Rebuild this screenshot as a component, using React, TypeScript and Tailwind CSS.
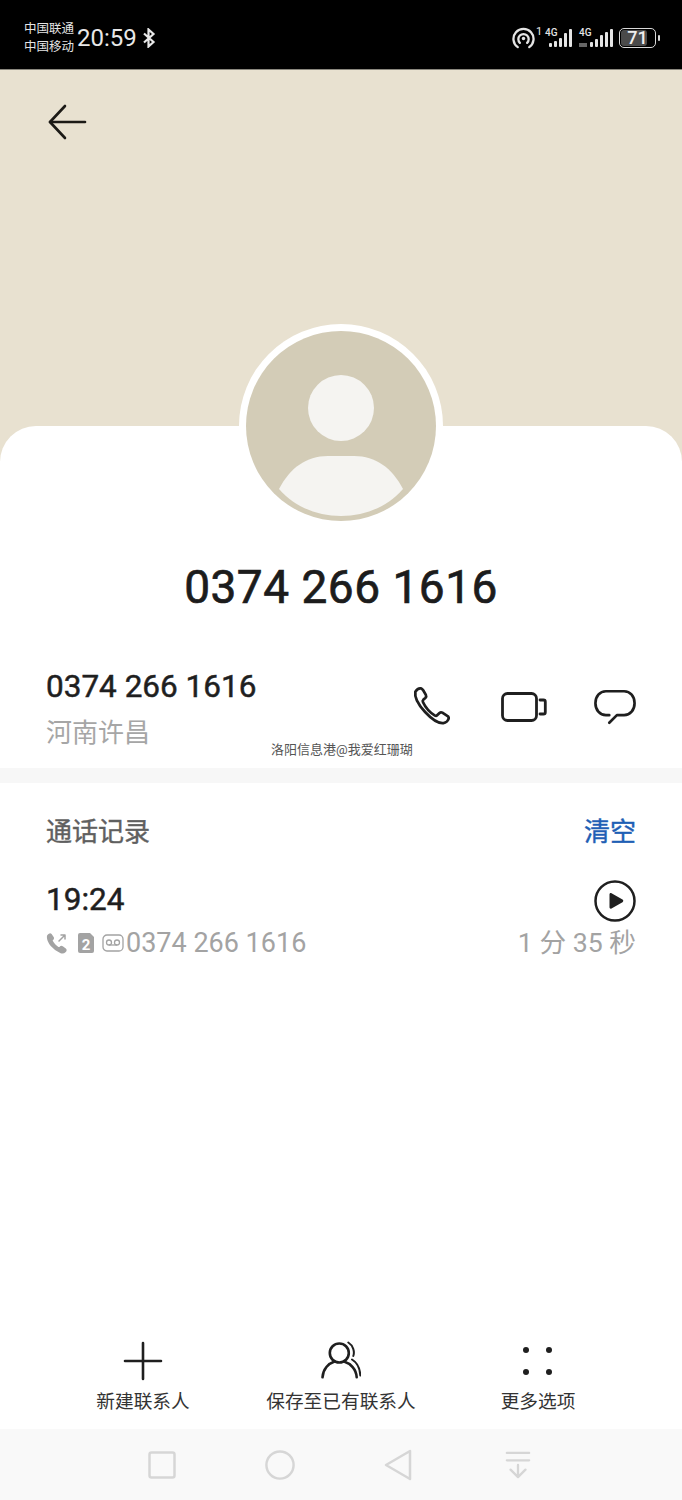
import type { ReactNode } from 'react';

const FONT = "font-['Roboto','Noto_Sans_CJK_SC',sans-serif]";

function BackIcon() {
  return (
    <svg width="40" height="36" viewBox="0 0 40 36" fill="none" stroke="#1c1a16" strokeWidth="2.6" strokeLinecap="round" strokeLinejoin="round">
      <path d="M2 18H37" />
      <path d="M17 2 2 18 17 34" />
    </svg>
  );
}

function Signal({ dim }: { dim: boolean }) {
  return (
    <div className={`relative h-[20px] ${dim ? 'ml-[5px] w-[35px]' : 'ml-[3px] w-[29px]'}`}>
      <span className="absolute left-0 top-0 text-[10px] font-medium leading-none">4G</span>
      {dim ? (
        <svg className="absolute bottom-0 left-0" width="35" height="20" viewBox="0 0 35 20" fill="#e4e4e4">
          <rect x="0" y="15" width="8" height="4" fill="#666666" />
          <rect x="11" y="14" width="3" height="5" rx="1" />
          <rect x="16" y="11" width="3" height="8" rx="1" />
          <rect x="21" y="7" width="3" height="12" rx="1" />
          <rect x="26" y="4" width="3" height="15" rx="1" />
          <rect x="31" y="1" width="3" height="18" rx="1" />
        </svg>
      ) : (
        <svg className="absolute bottom-0 left-0" width="29" height="20" viewBox="0 0 29 20" fill="#e4e4e4">
          <rect x="4" y="15" width="3" height="4" rx="1" />
          <rect x="9" y="13" width="3" height="6" rx="1" />
          <rect x="14" y="10" width="3" height="9" rx="1" />
          <rect x="19" y="5" width="3" height="14" rx="1" />
          <rect x="24" y="1" width="3" height="18" rx="1" />
        </svg>
      )}
    </div>
  );
}

function StatusRight() {
  return (
    <div className="flex items-center text-[#e4e4e4]">
      <svg width="23" height="22" viewBox="0 0 24 23" fill="none" stroke="#e4e4e4" strokeWidth="2.4" strokeLinecap="round">
        <path d="M6 21A10.5 10.5 0 1 1 18 21" />
        <path d="M8.2 16.6A5.4 5.4 0 1 1 15.8 16.6" />
        <circle cx="12" cy="12" r="1.8" fill="#e4e4e4" stroke="none" />
      </svg>
      <span className="mb-3 ml-px w-[6px] text-[11px] leading-none">1</span>
      <Signal dim={false} />
      <Signal dim />
      <div className="relative ml-[5px] flex h-[20px] w-[37px] items-center justify-center rounded-[5px] border-[1.5px] border-[#d8d8d8]">
        <div className="absolute inset-y-[1px] left-[1px] w-[26px] rounded-[3px] bg-[#4a4a4a]" />
        <span className="relative text-[18px] font-medium leading-none text-[#eeeeee]">71</span>
      </div>
      <div className="ml-[2px] h-[6px] w-[2px] rounded-full bg-[#d8d8d8]" />
    </div>
  );
}

function PhoneIcon() {
  return (
    <svg width="42" height="42" viewBox="0 0 40 40" fill="none" stroke="#1f1f1f" strokeWidth="2.6" strokeLinejoin="round" strokeLinecap="round">
      <path d="M3.2 5.5C4.5 3.4 7 2 8.5 2.3c1 .2 1.7 1 2.3 2l2.4 4.2c.6 1.1.4 2-.5 2.9l-2 1.8c-.6.6-.7 1.2-.3 2 2.3 5 6.6 10 11.5 13 .8.4 1.4.3 2-.3l2.3-2.2c.8-.7 1.7-.9 2.7-.3l4.7 3c1 .6 1.6 1.5 1.3 2.7-.5 1.9-2.7 4-4.900 4.200C21 36.500 1.200 16 3.200 5.500Z" />
    </svg>
  );
}

function VideoIcon() {
  return (
    <svg width="46" height="30" viewBox="0 0 46 30" fill="none" stroke="#1f1f1f" strokeWidth="2.8" strokeLinecap="round" strokeLinejoin="round">
      <rect x="1.5" y="1.5" width="34" height="27" rx="5" />
      <path d="M39 8h3.500c1 0 1.800.8 1.800 1.800v10.400c0 1-.8 1.800-1.800 1.800H39" />
    </svg>
  );
}

function ChatIcon() {
  return (
    <svg width="42" height="37" viewBox="0 0 44 38" fill="none" stroke="#1f1f1f" strokeWidth="2.8" strokeLinecap="round" strokeLinejoin="round">
      <path d="M16 27H12.500C6 27 1.500 21.500 1.500 14.500S6 2 12.500 2h19C38 2 42.500 7.500 42.500 14.500S38 27 31.500 27H24L16 35" />
    </svg>
  );
}

function PlayIcon() {
  return (
    <svg width="42" height="42" viewBox="0 0 42 42">
      <circle cx="21" cy="21" r="19.5" fill="none" stroke="#1f1f1f" strokeWidth="2.5" />
      <path d="M15.500 14.500c0-1.200 1-1.800 2-1.200l11 6.300c1 .6 1 2 0 2.600l-11 6.300c-1 .6-2 0-2-1.200Z" fill="#1f1f1f" />
    </svg>
  );
}

function CallLogIcons() {
  return (
    <div className="flex items-center gap-[6px]">
      <svg width="22" height="22" viewBox="0 0 22 22" fill="none" stroke="#a3a3a3" strokeWidth="2" strokeLinecap="round" strokeLinejoin="round">
        <path d="M2 4c.7-1.300 2-2 2.800-1.500l2 3c.4.700.2 1.200-.3 1.700L5.500 8.500c1.300 3 4 6 7.500 8l1.500-1.300c.5-.5 1-.6 1.700-.2l3 2.200c.7.500.5 1.500-.4 2.300-1 .9-2.300 1.200-3.800.7C8 17.500 1 10 2 4Z" fill="#a3a3a3" />
        <path d="M13 9 19 3M15 3h4v4" strokeWidth="1.5" />
      </svg>
      <svg width="16" height="20" viewBox="0 0 16 20" className="ml-[4px]">
        <path d="M2 0h10l4 4v14a2 2 0 0 1-2 2H2a2 2 0 0 1-2-2V2a2 2 0 0 1 2-2Z" fill="#a3a3a3" />
        <text x="8" y="16.5" textAnchor="middle" fontSize="15" fontWeight="700" fill="#ffffff" fontFamily="Roboto, sans-serif">2</text>
      </svg>
      <svg width="22" height="18" viewBox="0 0 22 18" fill="none" stroke="#a3a3a3" strokeWidth="1.3" className="ml-[2px]">
        <rect x="1" y="1" width="20" height="16" rx="4" />
        <circle cx="7" cy="8.5" r="2.5" />
        <circle cx="15" cy="8.5" r="2.5" />
        <path d="M7 11h8" />
      </svg>
    </div>
  );
}

function PlusIcon() {
  return (
    <svg width="40" height="40" viewBox="0 0 40 40" stroke="#1f1f1f" strokeWidth="2.6" strokeLinecap="round">
      <path d="M20 2V38M2 20H38" />
    </svg>
  );
}

function ContactsIcon() {
  return (
    <svg width="40" height="40" viewBox="0 0 40 40" fill="none" stroke="#1f1f1f" strokeWidth="2.6" strokeLinecap="round">
      <circle cx="18.3" cy="12" r="9.5" />
      <path d="M1.500 36.300C2 28 7.500 22.500 13.500 20.500M23 20.500c6.500 2 12.300 7.500 12.700 15.800" />
      <path d="M27.300 1.500c5 3 6.500 9.500 5 13.500M31 18.500c5 3 8 9 8.300 16" strokeWidth="2" />
    </svg>
  );
}

function MoreIcon() {
  return (
    <svg width="40" height="40" viewBox="0 0 40 40" fill="#1f1f1f">
      <circle cx="8" cy="9" r="3" />
      <circle cx="31" cy="9" r="3" />
      <circle cx="8" cy="31" r="3" />
      <circle cx="31" cy="31" r="3" />
    </svg>
  );
}

function Action({ label, icon }: { label: string; icon: ReactNode }) {
  return (
    <div className="flex flex-col items-center whitespace-nowrap">
      {icon}
      <span className="mt-[9px] text-[18.7px] leading-[24px] text-[#333333]">{label}</span>
    </div>
  );
}

function NavBar() {
  return (
    <div className="flex h-[71px] items-center justify-center gap-[89px] bg-[#f9f9f9] pr-[3px]">
      <svg width="28" height="28" viewBox="0 0 28 28" fill="none" stroke="#d6d6d6" strokeWidth="2.5">
        <rect x="1.5" y="1.5" width="25" height="25" rx="2" />
      </svg>
      <svg width="30" height="30" viewBox="0 0 32 32" fill="none" stroke="#d6d6d6" strokeWidth="2.6">
        <circle cx="16" cy="16" r="14.5" />
      </svg>
      <svg width="28" height="32" viewBox="0 0 28 32" fill="none" stroke="#d6d6d6" strokeWidth="2.5" strokeLinejoin="round">
        <path d="M26 2V30L2 16Z" />
      </svg>
      <svg width="26" height="30" viewBox="0 0 28 30" fill="none" stroke="#d6d6d6" strokeWidth="2.5" strokeLinecap="round" strokeLinejoin="round" className="ml-[4px]">
        <path d="M2 2H26M2 10H26M14 15V28M6 20 14 28 22 20" />
      </svg>
    </div>
  );
}

function Avatar() {
  return (
    <div className="relative z-10 mx-auto -mt-[102px] h-[204px] w-[204px] rounded-full bg-white p-[7px]">
      <svg viewBox="0 0 190 190" className="h-[190px] w-[190px]">
        <circle cx="95" cy="95" r="95" fill="#d3ccb7" />
        <circle cx="95" cy="77" r="33" fill="#f5f4f1" />
        <path d="M33 158C44 137 60 125 82 125h26c22 0 38 12 49 33C141 176 119 185 95 185S49 176 33 158Z" fill="#f5f4f1" />
      </svg>
    </div>
  );
}

export default function App() {
  return (
    <div className={`${FONT} flex h-[1500px] w-[682px] flex-col overflow-hidden bg-white`}>
      {/* status bar */}
      <div className="flex h-[70px] items-center justify-between border-b border-[#8a877e] bg-black pl-[24px] pr-[22px] pt-[6px]">
        <div className="flex items-center">
          <div className="text-[12.5px] leading-[18px] text-[#e4e4e4]">
            <div>中国联通</div>
            <div>中国移动</div>
          </div>
          <span className="ml-[3px] text-[24px] leading-none text-[#e8e8e8]">20:59</span>
          <svg width="14" height="20" viewBox="0 0 14 20" fill="none" stroke="#e8e8e8" strokeWidth="2.2" className="ml-[5px]">
            <path d="M2 5.500 11.500 14 6.500 18.500V1.500L11.500 6 2 14.500" />
          </svg>
        </div>
        <StatusRight />
      </div>

      {/* header */}
      <div className="h-[391px] shrink-0 bg-[#e8e1d0] pl-[48px] pt-[34px]">
        <BackIcon />
      </div>

      {/* main sheet */}
      <div className="relative -mt-[35px] flex flex-1 flex-col rounded-t-[36px] bg-white">
        <Avatar />

        <h1 className="mt-[29px] text-center text-[46px] font-normal leading-[60px] tracking-[0.5px] text-[#1c1c1c] [-webkit-text-stroke:0.7px_#1c1c1c]">0374 266 1616</h1>

        <div className="mt-[50px] flex h-[101px] items-start justify-between px-[46px]">
          <div>
            <div className="text-[31.5px] font-normal leading-[40px] text-[#1f1f1f] [-webkit-text-stroke:0.5px_#1f1f1f]">0374 266 1616</div>
            <div className="mt-[8px] text-[26px] leading-[36px] text-[#a6a6a6]">河南许昌</div>
          </div>
          <div className="mt-[19px] flex items-center gap-[47px]">
            <PhoneIcon />
            <VideoIcon />
            <ChatIcon />
          </div>
        </div>

        <div className="absolute left-[271px] top-[315px] text-[13px] leading-[18px] text-[#555555]">洛阳信息港@我爱红珊瑚</div>

        <div className="h-[15px] bg-[#f7f7f7]" />

        <div className="flex items-center justify-between px-[46px] pt-[31px]">
          <span className="text-[26px] font-normal leading-[36px] text-[#5f5f5f] [-webkit-text-stroke:0.4px_#5f5f5f]">通话记录</span>
          <span className="text-[26px] font-normal leading-[36px] text-[#1f5fb5] [-webkit-text-stroke:0.4px_#1f5fb5]">清空</span>
        </div>

        <div className="mt-[30px] flex items-center justify-between px-[46px]">
          <span className="pb-[2px] text-[31.5px] font-normal leading-[40px] text-[#1f1f1f] [-webkit-text-stroke:0.5px_#1f1f1f]">19:24</span>
          <PlayIcon />
        </div>

        <div className="mt-[2px] flex items-center justify-between px-[46px]">
          <div className="flex items-center gap-[2px]">
            <CallLogIcons />
            <span className="text-[27px] leading-[38px] text-[#a3a3a3]">0374 266 1616</span>
          </div>
          <span className="text-[26.7px] leading-[38px] text-[#a3a3a3]">1 分 35 秒</span>
        </div>

        <div className="flex-1" />

        {/* actions */}
        <div className="grid h-[92px] grid-cols-[286px_110px_284px] items-start pt-[4px]">
          <Action label="新建联系人" icon={<PlusIcon />} />
          <Action label="保存至已有联系人" icon={<ContactsIcon />} />
          <Action label="更多选项" icon={<MoreIcon />} />
        </div>

        <NavBar />
      </div>
    </div>
  );
}
